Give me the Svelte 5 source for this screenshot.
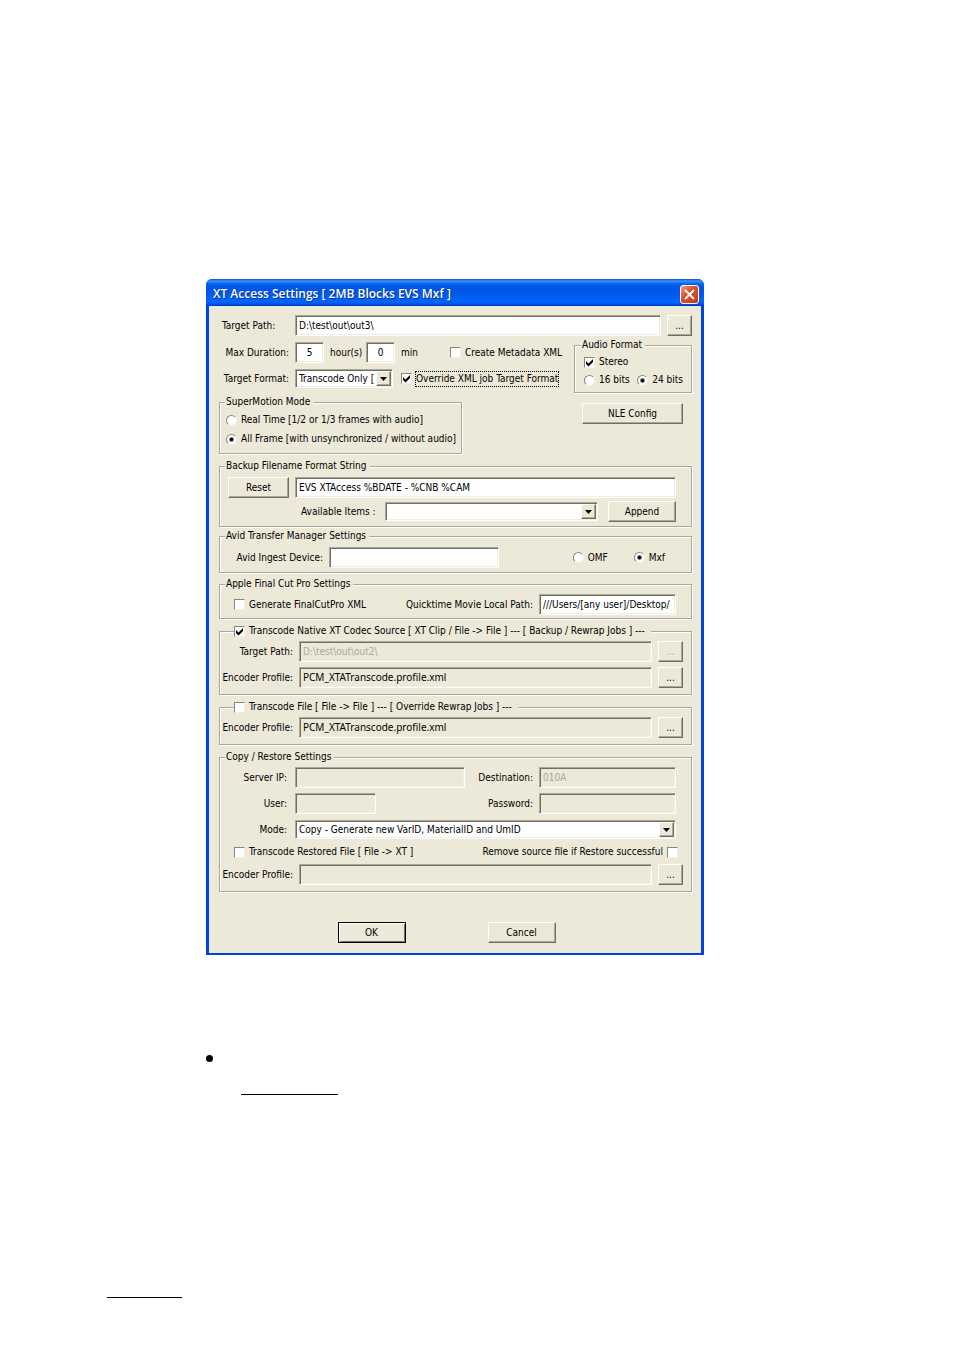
<script>
    let targetPath = 'D:\\test\\out\\out3\\';
    let hours = '5';
    let minutes = '0';
    let createMetadata = false;
    let targetFormat = 'Transcode Only [';
    let overrideFormat = true;
    let stereo = true;
    let bits = '24';
    let superMotion = 'all';
    let filenameFormat = 'EVS XTAccess %BDATE - %CNB %CAM';
    let ingestDevice = '';
    let ingestType = 'mxf';
    let generateXml = false;
    let moviePath = '///Users/[any user]/Desktop/';
    let transcodeNative = true;
    let nativePath = 'D:\\test\\out\\out2\\';
    let nativeProfile = 'PCM_XTATranscode.profile.xml';
    let transcodeFile = false;
    let fileProfile = 'PCM_XTATranscode.profile.xml';
    let mode = 'Copy - Generate new VarID, MaterialID and UmID';
    let transcodeRestored = false;
    let removeSource = false;
</script>

{#snippet arrow()}
    <span class="arrow">
        <svg width="7" height="4" viewBox="0 0 7 4" aria-hidden="true">
            <path d="M0 0h7L3.500 4z" />
        </svg>
    </span>
{/snippet}

<main>
    <form class="dialog" on:submit|preventDefault>
        <header>
            <h1>XT Access Settings [ 2MB Blocks EVS Mxf ]</h1>
            <button type="button" class="close" aria-label="Close">
                <svg width="11" height="11" viewBox="0 0 11 11" aria-hidden="true">
                    <path d="M1 1l9 9M10 1l-9 9" />
                </svg>
            </button>
        </header>

        <div class="body">
            <div class="row">
                <label class="name start" for="target-path">Target Path:</label>
                <input class="grow" type="text" id="target-path" bind:value={targetPath} />
                <button type="button" class="browse">...</button>
            </div>

            <div class="columns">
                <div class="left">
                    <div class="row">
                        <label class="name" for="hours">Max Duration:</label>
                        <input class="tiny" type="text" id="hours" bind:value={hours} />
                        <label class="hours" for="hours">hour(s)</label>
                        <input class="tiny" type="text" id="minutes" bind:value={minutes} />
                        <label for="minutes">min</label>
                        <label class="check metadata">
                            <input type="checkbox" bind:checked={createMetadata} />
                            <span>Create Metadata XML</span>
                        </label>
                    </div>
                    <div class="row format">
                        <label class="name" for="target-format">Target Format:</label>
                        <div class="select short">
                            <select id="target-format" bind:value={targetFormat}>
                                <option>Transcode Only [</option>
                            </select>
                            {@render arrow()}
                        </div>
                        <label class="check override">
                            <input type="checkbox" bind:checked={overrideFormat} />
                            <span class="focused">Override XML job Target Format</span>
                        </label>
                    </div>
                    <fieldset class="motion">
                        <legend>SuperMotion Mode</legend>
                        <label class="check">
                            <input type="radio" name="motion" value="real" bind:group={superMotion} />
                            <span>Real Time [1/2 or 1/3 frames with audio]</span>
                        </label>
                        <label class="check">
                            <input type="radio" name="motion" value="all" bind:group={superMotion} />
                            <span>All Frame [with unsynchronized / without audio]</span>
                        </label>
                    </fieldset>
                </div>
                <div class="right">
                    <fieldset class="audio">
                        <legend>Audio Format</legend>
                        <label class="check">
                            <input type="checkbox" bind:checked={stereo} />
                            <span>Stereo</span>
                        </label>
                        <div class="bits">
                            <label class="check">
                                <input type="radio" name="bits" value="16" bind:group={bits} />
                                <span>16 bits</span>
                            </label>
                            <label class="check">
                                <input type="radio" name="bits" value="24" bind:group={bits} />
                                <span>24 bits</span>
                            </label>
                        </div>
                    </fieldset>
                    <button type="button" class="nle">NLE Config</button>
                </div>
            </div>

            <fieldset class="backup">
                <legend>Backup Filename Format String</legend>
                <div class="row">
                    <button type="button" class="reset">Reset</button>
                    <input class="grow" type="text" aria-label="Filename format" bind:value={filenameFormat} />
                </div>
                <div class="row items">
                    <label for="items">Available Items :</label>
                    <div class="select grow">
                        <select id="items"><option></option></select>
                        {@render arrow()}
                    </div>
                    <button type="button" class="wide">Append</button>
                </div>
            </fieldset>

            <fieldset class="avid">
                <legend>Avid Transfer Manager Settings</legend>
                <div class="row">
                    <label class="device" for="device">Avid Ingest Device:</label>
                    <input class="medium" type="text" id="device" bind:value={ingestDevice} />
                    <div class="types">
                        <label class="check">
                            <input type="radio" name="ingest" value="omf" bind:group={ingestType} />
                            <span>OMF</span>
                        </label>
                        <label class="check">
                            <input type="radio" name="ingest" value="mxf" bind:group={ingestType} />
                            <span>Mxf</span>
                        </label>
                    </div>
                </div>
            </fieldset>

            <fieldset class="apple">
                <legend>Apple Final Cut Pro Settings</legend>
                <div class="row">
                    <label class="check">
                        <input type="checkbox" bind:checked={generateXml} />
                        <span>Generate FinalCutPro XML</span>
                    </label>
                    <label class="push" for="movie-path">Quicktime Movie Local Path:</label>
                    <input class="side" type="text" id="movie-path" bind:value={moviePath} />
                </div>
            </fieldset>

            <fieldset class="transcode">
                <legend>
                    <label class="check">
                        <input type="checkbox" bind:checked={transcodeNative} />
                        <span>Transcode Native XT Codec Source [ XT Clip / File -&gt; File ] --- [ Backup / Rewrap Jobs ] ---</span>
                    </label>
                </legend>
                <div class="row">
                    <label class="name" for="native-path">Target Path:</label>
                    <input class="grow" type="text" id="native-path" disabled value={nativePath} />
                    <button type="button" class="browse" disabled>...</button>
                </div>
                <div class="row">
                    <label class="name" for="native-profile">Encoder Profile:</label>
                    <input class="grow profile" type="text" id="native-profile" readonly value={nativeProfile} />
                    <button type="button" class="browse">...</button>
                </div>
            </fieldset>

            <fieldset class="transcode">
                <legend>
                    <label class="check">
                        <input type="checkbox" bind:checked={transcodeFile} />
                        <span>Transcode File [ File -&gt; File ] --- [ Override Rewrap Jobs ] ---</span>
                    </label>
                </legend>
                <div class="row">
                    <label class="name" for="file-profile">Encoder Profile:</label>
                    <input class="grow profile" type="text" id="file-profile" readonly value={fileProfile} />
                    <button type="button" class="browse">...</button>
                </div>
            </fieldset>

            <fieldset class="copy">
                <legend>Copy / Restore Settings</legend>
                <div class="row">
                    <label class="name" for="server">Server IP:</label>
                    <input class="medium" type="text" id="server" disabled />
                    <label class="push" for="destination">Destination:</label>
                    <input class="side" type="text" id="destination" disabled value="010A" />
                </div>
                <div class="row">
                    <label class="name" for="user">User:</label>
                    <input class="small" type="text" id="user" disabled />
                    <label class="push" for="password">Password:</label>
                    <input class="side" type="password" id="password" disabled />
                </div>
                <div class="row">
                    <label class="name" for="mode">Mode:</label>
                    <div class="select grow">
                        <select id="mode" bind:value={mode}>
                            <option>Copy - Generate new VarID, MaterialID and UmID</option>
                        </select>
                        {@render arrow()}
                    </div>
                </div>
                <div class="row checks">
                    <label class="check">
                        <input type="checkbox" bind:checked={transcodeRestored} />
                        <span>Transcode Restored File [ File -&gt; XT ]</span>
                    </label>
                    <label class="check push">
                        <span>Remove source file if Restore successful</span>
                        <input type="checkbox" bind:checked={removeSource} />
                    </label>
                </div>
                <div class="row encoder">
                    <label class="name" for="restore-profile">Encoder Profile:</label>
                    <input class="grow profile" type="text" id="restore-profile" readonly />
                    <button type="button" class="browse">...</button>
                </div>
            </fieldset>

            <footer>
                <button type="submit" class="wide default">OK</button>
                <button type="button" class="wide">Cancel</button>
            </footer>
        </div>
    </form>

    <div class="bullet"></div>
    <div class="rule"></div>
    <div class="rule foot"></div>
</main>

<style>
  :global(body) {
    margin: 0;
    background: #fff;
  }

  main {
    padding: 279px 250px 52px 206px;
    font: 10px/14px "DejaVu Sans Condensed", "Open Sans", sans-serif;
    color: #000;
  }

  main * {
    box-sizing: border-box;
  }

  .dialog {
    background: #ece9d8;
    border: solid #0042dc;
    border-width: 0 3px 2px;
    border-radius: 6px 6px 0 0;
  }

  header {
    display: flex;
    align-items: center;
    justify-content: space-between;
    height: 27px;
    margin: 0 -3px;
    padding: 3px 5px 0 7px;
    border-radius: 6px 6px 0 0;
    background: linear-gradient(#0a4fd0 0, #3a91ff 2px, #0560ea 5px, #0054e3 10px, #005af0 16px, #0066ff 22px, #0060f8 24px, #0038c0 27px);
  }

  h1 {
    margin: 0;
    font: 600 12px/16px "Open Sans", sans-serif;
    color: #fff;
    text-shadow: 1px 1px 0 #0a2f8c;
    white-space: nowrap;
  }

  label,
  legend {
    white-space: nowrap;
  }

  button {
    height: 21px;
    padding: 0;
    font: inherit;
    color: #000;
    background: #ece9d8;
    border: 1px solid;
    border-color: #fff #716f64 #716f64 #fff;
    border-radius: 0;
    box-shadow: inset -1px -1px 0 #aca899;
    flex: none;
  }

  button:disabled {
    color: #aca899;
    text-shadow: 1px 1px 0 #fff;
  }

  .close {
    display: flex;
    align-items: center;
    justify-content: center;
    width: 19px;
    height: 19px;
    border: 1px solid #fff;
    border-radius: 3px;
    background: linear-gradient(135deg, #f0a088, #e0512b 40%, #c83a14);
    box-shadow: none;
  }

  .close path {
    stroke: #fff;
    stroke-width: 2;
    fill: none;
  }

  .browse {
    width: 25px;
  }

  .wide {
    width: 68px;
  }

  .body {
    padding: 9px 9px 10px 10px;
  }

  .row {
    display: flex;
    align-items: center;
    height: 21px;
    gap: 6px;
  }

  .name {
    width: 70px;
    flex: none;
    text-align: right;
  }

  .start {
    padding-left: 3px;
    text-align: left;
  }

  .grow {
    flex: 1;
    min-width: 0;
  }

  .push {
    margin-left: auto;
  }

  input[type='text'],
  input[type='password'],
  .select {
    height: 21px;
    margin: 0;
    padding: 0 3px 1px;
    font: inherit;
    line-height: 18px;
    color: #000;
    background: #fff;
    border: 1px solid;
    border-color: #aca899 #fff #fff #aca899;
    border-radius: 0;
    box-shadow: inset 1px 1px 0 #716f64, inset -1px -1px 0 #f1efe2;
    outline: none;
  }

  input[type]:disabled,
  input[type]:read-only:not([type='checkbox'], [type='radio']) {
    background: #ece9d8;
  }

  input[type]:disabled {
    color: #aca899;
  }

  /* the condensed face drops the underscore at this size */
  input[type].profile {
    font-family: "Noto Sans", sans-serif;
  }

  input.tiny {
    width: 29px;
    padding: 0 0 1px;
    text-align: center;
  }

  input.small {
    width: 81px;
  }

  input.medium {
    width: 170px;
  }

  input.side {
    width: 137px;
  }

  .select {
    position: relative;
    height: 19px;
    padding: 1px;
  }

  .short {
    width: 98px;
  }

  select {
    display: block;
    appearance: none;
    width: 100%;
    height: 15px;
    padding: 0 16px 0 2px;
    font: inherit;
    line-height: 14px;
    color: #000;
    background: none;
    border: none;
    outline: none;
  }

  .arrow {
    position: absolute;
    top: 1px;
    right: 1px;
    display: flex;
    align-items: center;
    justify-content: center;
    width: 15px;
    height: 15px;
    background: #ece9d8;
    border: 1px solid;
    border-color: #fff #716f64 #716f64 #fff;
    box-shadow: inset -1px -1px 0 #aca899;
    pointer-events: none;
  }

  .check {
    display: flex;
    align-items: center;
    gap: 4px;
  }

  input[type='checkbox'],
  input[type='radio'] {
    appearance: none;
    flex: none;
    width: 11px;
    height: 11px;
    margin: 0;
    background: #fff;
    border: 1px solid;
    border-color: #8a877a #f1efe2 #f1efe2 #8a877a;
  }

  input[type='checkbox']:checked {
    background: #fff url("data:image/svg+xml,%3Csvg xmlns='http://www.w3.org/2000/svg' viewBox='0 0 9 9'%3E%3Cpath d='M1 3L3.500 5.500L8 1V4L3.500 8.500L1 6z'/%3E%3C/svg%3E");
  }

  input[type='radio'] {
    border-radius: 50%;
  }

  input[type='radio']:checked {
    background: radial-gradient(#000 1px, #fff 3px);
  }

  .focused {
    outline: 1px dotted #000;
  }

  fieldset {
    min-width: 0;
    margin: 0;
    padding: 3px 15px 3px 5px;
    border: 1px solid #aca899;
    box-shadow: 1px 1px 0 #fff, inset 1px 1px 0 #fff;
  }

  legend {
    position: relative;
    height: 14px;
    padding: 0 3px 0 1px;
    background: #ece9d8;
  }

  .columns {
    display: flex;
    justify-content: space-between;
    margin-top: 2px;
  }

  .left {
    padding-top: 4px;
  }

  .hours {
    width: 30px;
  }

  .metadata {
    margin-left: 26px;
  }

  .format {
    margin-top: 5px;
  }

  .override {
    margin-left: 2px;
  }

  .motion {
    display: block;
    width: 243px;
    margin-top: 6px;
    padding: 4px 6px 7px;
  }

  .motion legend {
    margin-left: -1px;
  }

  .motion .check + .check {
    margin-top: 5px;
  }

  .right {
    flex: none;
    width: 118px;
  }

  .audio {
    padding: 3px 8px 5px 9px;
  }

  .audio legend {
    margin-left: -3px;
  }

  .bits {
    display: flex;
    justify-content: space-between;
    margin-top: 4px;
  }

  .nle {
    display: block;
    width: 101px;
    margin: 10px 0 0 8px;
  }

  .backup {
    margin-top: 5px;
    padding: 4px 15px 4px 8px;
  }

  .backup legend {
    margin-left: -3px;
  }

  .reset {
    width: 61px;
  }

  .items {
    gap: 10px;
    margin-top: 3px;
    padding-left: 73px;
  }

  .items label {
    width: 74px;
  }

  .avid {
    margin-top: 2px;
    padding: 4px 26px 4px 5px;
  }

  .device {
    width: 98px;
    text-align: right;
  }

  .types {
    display: flex;
    gap: 26px;
    margin-left: auto;
  }

  .apple {
    margin-top: 4px;
    padding-left: 14px;
  }

  .apple legend {
    margin-left: -9px;
  }

  .transcode {
    margin-top: 5px;
    padding: 3px 8px 6px 0;
  }

  .transcode legend {
    margin-left: 14px;
    padding: 0 6px 0 0;
  }

  .transcode .row + .row,
  .copy .row + .row {
    margin-top: 5px;
  }

  .transcode .name {
    width: 73px;
  }

  .copy {
    margin-top: 5px;
    padding: 3px 15px 6px 0;
  }

  .copy legend {
    margin-left: 5px;
  }

  .copy .name {
    width: 69px;
    padding-right: 2px;
  }

  .copy .checks {
    height: 14px;
    padding-left: 14px;
    margin-right: -2px;
  }

  .copy .encoder {
    margin-right: -7px;
  }

  .copy .encoder .name {
    width: 73px;
    padding-right: 0;
  }

  footer {
    display: flex;
    justify-content: center;
    gap: 82px;
    margin-top: 30px;
    padding-right: 18px;
  }

  .default {
    outline: 1px solid #000;
    outline-offset: -1px;
    border-color: #000;
    box-shadow: inset 1px 1px 0 #fff, inset -1px -1px 0 #716f64;
  }

  .bullet {
    width: 7px;
    height: 7px;
    margin-top: 100px;
    border-radius: 50%;
    background: #000;
  }

  .rule {
    width: 97px;
    height: 1px;
    margin: 32px 0 0 35px;
    background: #000;
  }

  .foot {
    width: 75px;
    margin: 202px 0 0 -99px;
  }
</style>
